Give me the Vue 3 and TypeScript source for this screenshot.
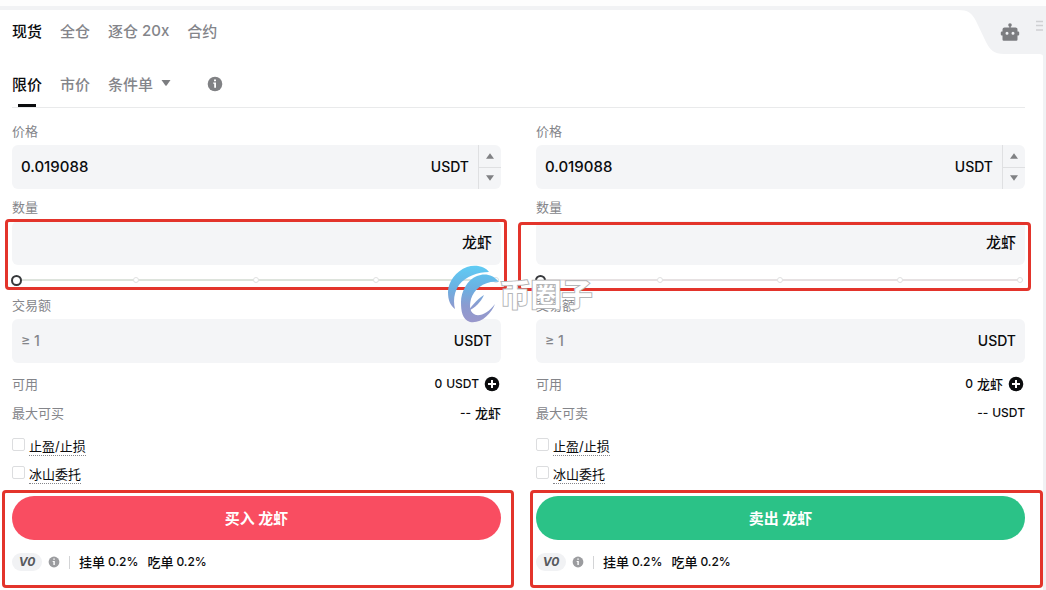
<script setup lang="ts">
import { ref } from 'vue'

interface Side {
  id: string
  price: string
  available: string
  availableUnit: string
  availableCjk: boolean
  maxLabel: string
  maxUnit: string
  maxCjk: boolean
  action: string
}

const modes = [
  { text: '现货', num: '' },
  { text: '全仓', num: '' },
  { text: '逐仓', num: '20x' },
  { text: '合约', num: '' },
]
const sides = ref<Side[]>([
  { id: 'buy', price: '0.019088', available: '0', availableUnit: 'USDT', availableCjk: false, maxLabel: '最大可买', maxUnit: '龙虾', maxCjk: true, action: '买入 龙虾' },
  { id: 'sell', price: '0.019088', available: '0', availableUnit: '龙虾', availableCjk: true, maxLabel: '最大可卖', maxUnit: 'USDT', maxCjk: false, action: '卖出 龙虾' },
])
const options = ['止盈/止损', '冰山委托']
</script>

<template>
  <div class="page">
    <main class="panel">
      <div class="corner">
        <svg class="corner-shape" width="92" height="56" viewBox="0 0 92 56" aria-hidden="true">
          <path d="M0 0H92V56H91Q91 45 86 45H50C40 45 36 41 32 33L22 12C18 4 14 1 4 1H0Z" fill="#f1f2f4" />
        </svg>
        <button class="bot" type="button" aria-label="机器人">
          <svg width="20" height="20" viewBox="0 0 20 20">
            <circle cx="10" cy="3" r="1.8" fill="#7c7d80" />
            <path d="M9.3 3h1.4v4H9.3z" fill="#7c7d80" />
            <path fill-rule="evenodd" d="M4.500 5.500h11Q17.500 5.500 17.500 7.500V9.500h.7q1 0 1 1v2q0 1-1 1h-.7v4q0 1.200-1.200 1.200H3.700q-1.200 0-1.200-1.200v-4h-.7q-1 0-1-1v-2q0-1 1-1h.7V7.500Q2.500 5.500 4.500 5.500ZM7 9.800a1.500 1.500 0 1 0 0 3a1.500 1.500 0 1 0 0-3ZM13 9.800a1.500 1.500 0 1 0 0 3a1.500 1.500 0 1 0 0-3Z" fill="#7c7d80" />
          </svg>
        </button>
        <svg class="grip" width="7" height="12" viewBox="0 0 7 12" aria-hidden="true">
          <path d="M0 1.500h7M0 5.500h7M0 10h7" stroke="#cfd0d2" stroke-width="1.500" />
        </svg>
      </div>

      <nav class="modes">
        <button v-for="(m, i) in modes" :key="m.text" type="button" class="tab" :class="{ active: i === 0 }">
          <span>{{ m.text }}</span><span v-if="m.num">{{ m.num }}</span>
        </button>
      </nav>

      <nav class="orders">
        <button type="button" class="tab active current">限价</button>
        <button type="button" class="tab">市价</button>
        <button type="button" class="tab more">
          <span>条件单</span>
          <svg width="10" height="6" viewBox="0 0 10 6"><path d="M0.500 0h9L5.600 5.500q-.6.600-1.200 0Z" fill="#7c7d80" /></svg>
        </button>
        <button type="button" class="info" aria-label="说明">
          <svg width="16" height="16" viewBox="0 0 16 16">
            <circle cx="8" cy="8" r="7.300" fill="#808184" />
            <path d="M7 3.500h2v1.800H7zM6.200 6.500H9v5.300H7.200V7.800h-1z" fill="#fff" />
          </svg>
        </button>
      </nav>

      <div class="columns">
        <form v-for="s in sides" :key="s.id" class="side" :class="s.id" @submit.prevent>
          <label class="label" :for="s.id + '-price'">价格</label>
          <div class="box">
            <input :id="s.id + '-price'" v-model="s.price" type="text" />
            <span class="unit">USDT</span>
            <div class="steps">
              <button type="button" aria-label="增加"><svg width="8" height="6" viewBox="0 0 8 6"><path d="M4 0.300L8 5.700H0Z" fill="#808184" /></svg></button>
              <button type="button" aria-label="减少"><svg width="8" height="6" viewBox="0 0 8 6"><path d="M4 5.700L8 0.300H0Z" fill="#808184" /></svg></button>
            </div>
          </div>

          <label class="label" :for="s.id + '-amount'">数量</label>
          <div class="amount">
            <div class="box">
              <input :id="s.id + '-amount'" type="text" />
              <span class="unit cjk">龙虾</span>
            </div>
            <div class="slider">
              <div class="stops"><i v-for="n in 5" :key="n" /></div>
              <input type="range" min="0" max="100" value="0" aria-label="数量比例" />
            </div>
            <div class="mark mark-amount" />
          </div>

          <label class="label total" :for="s.id + '-total'">交易额</label>
          <div class="box">
            <input :id="s.id + '-total'" type="text" placeholder="≥ 1" />
            <span class="unit">USDT</span>
          </div>

          <div class="row first">
            <span>可用</span>
            <span class="value">
              <b class="num">{{ s.available }}</b>
              <b :class="{ num: !s.availableCjk }">{{ s.availableUnit }}</b>
              <button type="button" class="add" aria-label="充值">
                <svg width="16" height="16" viewBox="0 0 16 16"><circle cx="8" cy="8" r="7.300" fill="#0b0c0e" /><path d="M8 4v8M4 8h8" stroke="#fff" stroke-width="2" /></svg>
              </button>
            </span>
          </div>
          <div class="row">
            <span>{{ s.maxLabel }}</span>
            <span class="value"><b class="num">--</b><b :class="{ num: !s.maxCjk }">{{ s.maxUnit }}</b></span>
          </div>

          <div class="checks">
            <label v-for="o in options" :key="o"><input type="checkbox" /><span>{{ o }}</span></label>
          </div>

          <div class="submit">
            <button type="submit" class="action">{{ s.action }}</button>
            <div class="fees">
              <span class="level">V0</span>
              <svg width="12" height="12" viewBox="0 0 12 12" aria-hidden="true">
                <circle cx="6" cy="6" r="5.400" fill="#9b9c9f" />
                <path d="M5.300 2.500h1.500v1.300H5.300zM4.700 4.900h2.100v4H5.400V5.900h-.7z" fill="#fff" />
              </svg>
              <span class="bar" />
              <span class="fee">挂单<span class="num">0.2%</span></span>
              <span class="fee">吃单<span class="num">0.2%</span></span>
            </div>
            <div class="mark mark-submit" />
          </div>
        </form>

        <div class="watermark">
          <svg width="54" height="60" viewBox="0 0 54 60" aria-hidden="true">
            <defs>
              <linearGradient id="wave" gradientUnits="userSpaceOnUse" x1="0" y1="0" x2="0" y2="58">
                <stop offset="0" stop-color="#5fcdf5" /><stop offset=".4" stop-color="#6bb0e2" /><stop offset=".7" stop-color="#8b9bd0" /><stop offset="1" stop-color="#9a97cb" />
              </linearGradient>
            </defs>
            <path d="M41 7C38 2 28-1 19 2C8 6 0 17 0 27C0 35 2 40 7 44C5 36 6 27 11 20C18 11 30 7 41 7Z" fill="url(#wave)" />
            <path d="M51 17C45 9 36 8 29 11C19 15 13 27 13 37C13 46 14 54 22 57C33 59 43 49 47 39C41 47 34 51 28 50C22 48 21 42 23 34C26 24 37 15 51 17Z" fill="url(#wave)" />
            <path d="M36 30C31 33 25 39 20 46C27 43 33 37 36 30Z" fill="url(#wave)" />
          </svg>
          <span>币圈子</span>
        </div>
      </div>
    </main>
  </div>
</template>

<style>
body {
  margin: 0;
  background: #f1f2f4;
}
</style>

<style scoped>
* {
  box-sizing: border-box;
}
.page {
  min-height: 100vh;
  padding: 10px 3px 0 0;
  overflow: hidden;
  display: flex;
  background: linear-gradient(#fdfdfd 6px, #f1f2f4 6px);
  font-family: Inter, "Noto Sans CJK SC", sans-serif;
  color: #0b0c0e;
}
.panel {
  position: relative;
  flex: 1;
  min-width: 0;
  padding: 0 18px 0 12px;
  background: #fff;
}
button {
  padding: 0;
  border: 0;
  background: none;
  color: inherit;
  font: inherit;
  cursor: pointer;
}
svg {
  display: block;
}
.corner {
  position: absolute;
  top: -1px;
  right: -3px;
  width: 92px;
  height: 56px;
}
.corner-shape {
  position: absolute;
}
.bot {
  position: absolute;
  left: 46px;
  top: 13px;
}
.grip {
  position: absolute;
  right: 3px;
  top: 11px;
}
.modes,
.orders {
  display: flex;
  align-items: center;
  gap: 18px;
}
.modes {
  height: 41px;
}
.orders {
  height: 57px;
  padding-top: 8px;
  border-bottom: 1px solid #e9eaeb;
}
.tab {
  position: relative;
  display: flex;
  align-items: center;
  gap: 4px;
  height: 100%;
  color: #84858a;
  font-size: 15px;
  font-weight: 500;
}
.active {
  color: #0b0c0e;
}
.current::after {
  content: "";
  position: absolute;
  left: 6px;
  right: 6px;
  bottom: 0;
  height: 3px;
  background: #0b0c0e;
}
.tab.more {
  gap: 8px;
}
.info {
  margin-left: 18px;
  padding-top: 2px;
}
.columns {
  position: relative;
  display: grid;
  grid-template-columns: 1fr 1fr;
  gap: 35px;
  padding: 13px 0 18px;
}
.label {
  display: block;
  height: 20px;
  margin: 8px 0 4px;
  line-height: 20px;
  font-size: 13px;
  color: #84858a;
}
.label:first-child,
.label.total {
  margin-top: 0;
}
.box {
  display: flex;
  align-items: center;
  height: 44px;
  border-radius: 6px;
  background: #f4f5f7;
  overflow: hidden;
}
.box input {
  flex: 1;
  min-width: 0;
  height: 100%;
  padding: 0 9px 2px;
  border: 0;
  outline: 0;
  background: none;
  color: #0b0c0e;
  font: 500 15px Inter, "Noto Sans CJK SC", sans-serif;
}
.box input::placeholder {
  color: #84858a;
  font-size: 14px;
  opacity: 1;
}
.unit {
  padding: 0 9px 2px 0;
  font-size: 14px;
  font-weight: 500;
}
.unit.cjk {
  padding-bottom: 4px;
  font-size: 15px;
}
.steps {
  display: flex;
  flex-direction: column;
  width: 23px;
  height: 100%;
  border-left: 1px solid #dfe0e2;
}
.steps button {
  flex: 1;
  display: grid;
  place-items: center;
}
.steps button + button {
  border-top: 1px solid #dfe0e2;
}
.amount,
.submit {
  position: relative;
}
.slider {
  display: grid;
  align-items: center;
  height: 30px;
}
.stops,
.slider input {
  grid-area: 1 / 1;
}
.stops {
  display: flex;
  align-items: center;
  justify-content: space-between;
  height: 2px;
  margin: 0 2px 0 1px;
  background: #dde3dc;
}
.sell .stops {
  background: #e6e1e2;
}
.stops i {
  width: 6px;
  height: 6px;
  border: 1px solid #e0e1e1;
  border-radius: 50%;
  background: #fff;
}
.slider input {
  appearance: none;
  height: 12px;
  margin: 0 0 0 -1px;
  background: none;
}
.slider input::-webkit-slider-thumb {
  appearance: none;
  width: 11px;
  height: 11px;
  border: 2px solid #36383b;
  border-radius: 50%;
  background: #fff;
}
.row {
  display: flex;
  justify-content: space-between;
  margin-top: 9px;
  height: 20px;
  line-height: 20px;
  font-size: 13px;
  color: #84858a;
}
.row.first {
  margin-top: 11px;
}
.value {
  display: flex;
  align-items: center;
  gap: 4px;
  color: #0b0c0e;
}
.value b {
  font-weight: 500;
}
.num {
  font-size: 12px;
}
.add {
  margin: 0 1px;
}
.checks {
  display: grid;
  gap: 8px;
  margin: 13px 0 12px;
}
.checks label {
  display: flex;
  gap: 4px;
  height: 20px;
  line-height: 20px;
  font-size: 13px;
}
.checks input {
  appearance: none;
  width: 13px;
  height: 13px;
  margin: 2px 0 0;
  border: 1px solid #dcdddf;
  border-radius: 2px;
}
.checks span {
  border-bottom: 1px dotted #84858a;
}
.action {
  display: block;
  width: 100%;
  height: 44px;
  padding-bottom: 2px;
  border-radius: 22px;
  background: #f94d61;
  color: #fff;
  font-size: 15px;
  font-weight: 700;
}
.sell .action {
  background: #2bc287;
}
.fees {
  display: flex;
  align-items: center;
  height: 20px;
  margin-top: 12px;
  gap: 9px;
  font-size: 13px;
  font-weight: 500;
}
.fees svg {
  margin-left: -3px;
}
.fee {
  display: flex;
  align-items: center;
  gap: 3px;
  line-height: 18px;
}
.level {
  width: 30px;
  height: 18px;
  border-radius: 9px;
  background: #f1f2f4;
  color: #57595d;
  font-size: 12px;
  font-style: italic;
  font-weight: 700;
  line-height: 18px;
  text-align: center;
}
.bar {
  width: 1px;
  height: 13px;
  background: #d3d4d6;
}
.mark {
  position: absolute;
  border: 3px solid #e3342b;
  border-radius: 4px;
  pointer-events: none;
}
.mark-amount {
  inset: -2px -6px 5px -7px;
}
.sell .mark-amount {
  inset: 1px -6px 4px -18px;
}
.mark-submit {
  inset: -6px -13px -16px -10px;
}
.sell .mark-submit {
  inset: -6px -18px -16px -6px;
}
.watermark {
  position: absolute;
  left: 50%;
  top: 157px;
  margin-left: -71px;
  display: flex;
  align-items: center;
  pointer-events: none;
}
.watermark span {
  margin-left: -2px;
  color: #fff;
  font-size: 31px;
  font-weight: 700;
  line-height: 32px;
  -webkit-text-stroke: 2px #b4b5b7;
  paint-order: stroke fill;
}
</style>
